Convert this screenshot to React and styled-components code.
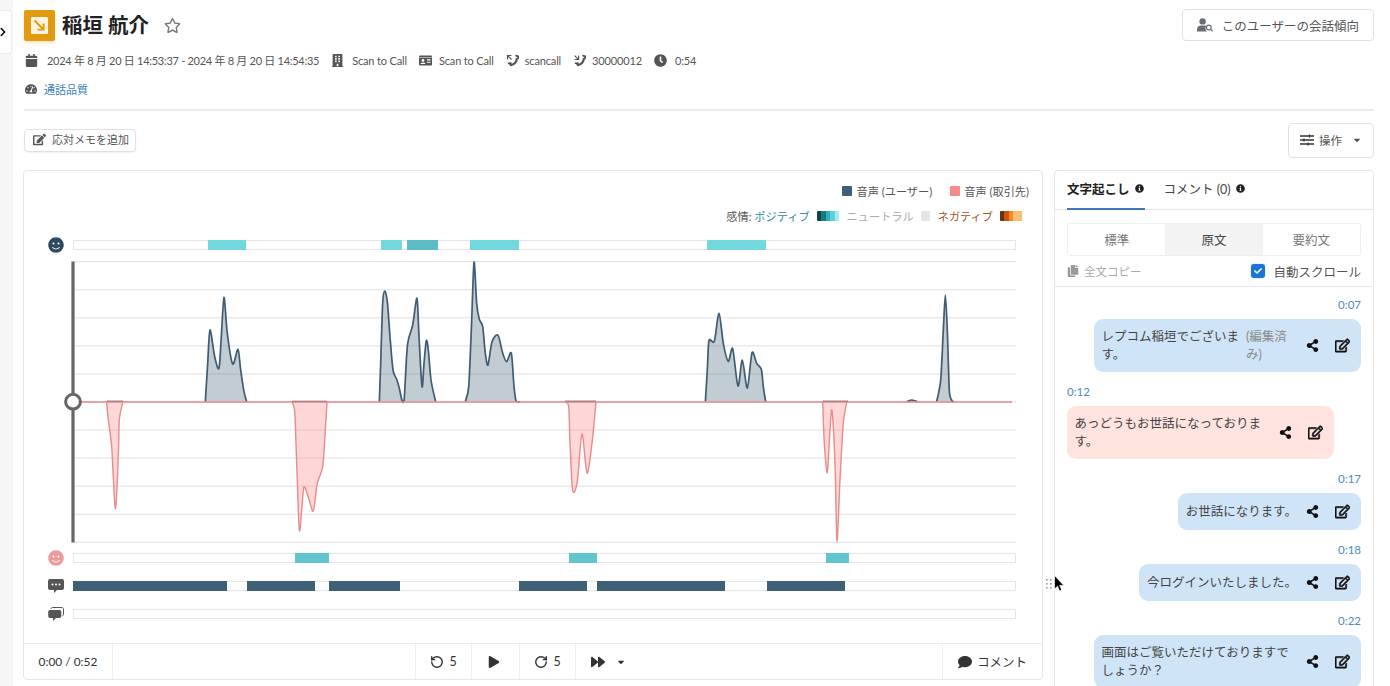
import React from 'react';
import styled, { createGlobalStyle } from 'styled-components';
import {
  FaCalendar, FaBuilding, FaIdCard, FaClock, FaTachometerAlt, FaRegStar, FaEdit, FaRegEdit, FaShareAlt,
  FaCopy, FaCaretDown, FaInfoCircle, FaSmile, FaPlay, FaForward, FaComment, FaCheck, FaChevronRight,
} from 'react-icons/fa';
import { RotateCcw, RotateCw } from 'lucide-react';

const Global = createGlobalStyle`
  html, body { margin: 0; padding: 0; height: 100%; overflow: hidden; background: #fff; }
  body { font-family: Lato, "Noto Sans CJK JP", "Noto Sans", sans-serif; color: #444; }
  * { box-sizing: border-box; }
`;

const Page = styled.div`display: flex; width: 1390px; height: 686px; overflow: hidden; position: relative;`;
const Rail = styled.aside`width: 13px; flex: none; background: #f6f6f6;`;
const RailTab = styled.button`
  display: flex; align-items: center; width: 12px; height: 44px; margin-top: 10px; padding: 0;
  background: #fff; border: 1px solid #ececec; border-left: 0; border-radius: 0 4px 4px 0; overflow: hidden; color: #111;
  svg { margin-left: -2px; flex: none; }
`;
const Main = styled.main`flex: 1; min-width: 0; padding: 0 16px 0 11px;`;
const TitleRow = styled.header`display: flex; align-items: center; justify-content: space-between; height: 32px; margin-top: 9px;`;
const TitleGroup = styled.div`display: flex; align-items: center;`;
const Logo = styled.div`
  width: 31px; height: 31px; background: #e29a10; border-radius: 2px; display: flex; align-items: center; justify-content: center;
  box-shadow: 0 2px 3px rgba(226,154,16,.25);
`;
const Title = styled.h1`margin: 0 0 0 7px; font-size: 20.5px; font-weight: 700; color: #222; line-height: 32px;`;
const StarBtn = styled.span`display: flex; margin-left: 15px; color: #777;`;
const OutlineButton = styled.button`
  display: flex; align-items: center; justify-content: center; gap: ${p => p.$gap ?? 9}px; height: ${p => p.$h}px; width: ${p => p.$w}px;
  padding: 0 0 ${p => p.$pb || 0}px; background: #fff; border: 1px solid #dfe1e4; border-radius: 4px; color: #555;
  font: 400 ${p => p.$fs || 12.5}px Lato, "Noto Sans CJK JP", sans-serif;
`;
const CaretGap = styled.span`display: flex; margin-left: 5px;`;
const MetaRow = styled.div`display: flex; align-items: center; height: 16px; margin-top: 11px; padding-left: 1px; font-size: 11px; color: #555;`;
const MetaItem = styled.span`
  display: flex; align-items: center; gap: ${p => p.$gap ?? 8}px; margin-right: 12px; white-space: nowrap; letter-spacing: ${p => p.$ls ?? -0.15}px;
  svg { flex: none; color: #555; }
`;
const QualityRow = styled.div`display: flex; align-items: center; gap: 7px; height: 16px; margin-top: 13px; padding-left: 1px; font-size: 11px; color: #3d7fb8; svg { color: #555; }`;
const Divider = styled.hr`margin: 12px 0 0; border: 0; height: 2px; background: #ececec;`;
const ActionRow = styled.div`display: flex; align-items: center; justify-content: space-between; height: 35px; margin-top: 12px;`;
const MemoButton = styled.button`
  display: flex; align-items: center; gap: 6px; width: 112px; height: 23px; padding: 0 0 3px 8px; background: #fff;
  border: 1px solid #dfe1e4; border-radius: 4px; box-shadow: 0 1px 2px rgba(0,0,0,.06); color: #555;
  font: 400 11px Lato, "Noto Sans CJK JP", sans-serif; white-space: nowrap;
`;
const Columns = styled.div`display: grid; grid-template-columns: 1020px 320px; gap: 11px; margin: 12px 0 0 -1px; align-items: start;`;
const ChartCard = styled.section`height: 510px; border: 1px solid #e6e6e6; border-radius: 4px; background: #fff; display: flex; flex-direction: column;`;
const Legend = styled.div`display: flex; justify-content: flex-end; align-items: center; gap: ${p => p.$gap}px; height: ${p => p.$h}px; margin-top: ${p => p.$mt}px; padding-right: ${p => p.$pr}px; font-size: 11.2px; color: #555; white-space: nowrap;`;
const LegendItem = styled.span`display: flex; align-items: center; gap: 4px;`;
const LegendSpan = styled.span`color: ${p => p.$c}; margin-left: ${p => p.$ml || 0}px;`;
const Swatch = styled.i`display: block; width: ${p => p.$w || 10}px; height: 10px; background: ${p => p.$c}; border-radius: 1px;`;
const ChartArea = styled.div`padding-left: 24px; margin-top: 16px;`;
const TrackRow = styled.div`display: flex; align-items: center; gap: 9px; height: 10px; margin-top: ${p => p.$mt || 0}px; svg { flex: none; }`;
const Track = styled.div`position: relative; width: 943px; height: 10px; background: #fff; border: 1px solid #e6e6e6;`;
const Segment = styled.i`position: absolute; top: -1px; bottom: -1px; background: ${p => p.$c};`;
const Wave = styled.svg`display: block; margin: 5px 0 4px 12px;`;
const Controls = styled.div`display: flex; height: 36px; margin-top: auto; border-top: 1px solid #ececec; color: #333; font-size: 12.4px;`;
const Cell = styled.div`
  display: flex; align-items: center; justify-content: center; gap: ${p => p.$gap ?? 5}px; flex: ${p => p.$grow ? 1 : 'none'}; width: ${p => p.$w ? p.$w + 'px' : 'auto'};
  padding-right: ${p => p.$pr || 0}px; border-left: ${p => p.$bl ? '1px solid #efefef' : '0'}; color: #333; font-size: ${p => p.$fs ? p.$fs + 'px' : 'inherit'};
`;
const Side = styled.section`height: 600px; border: 1px solid #e6e6e6; border-radius: 4px; background: #fff;`;
const Tabs = styled.div`display: flex; height: 39px; padding-left: 12px; border-bottom: 1px solid #e6e6e6;`;
const Tab = styled.div`
  display: flex; align-items: center; gap: 5px; height: 39px; padding-bottom: 2px; font-size: 12.5px; font-weight: ${p => p.$on ? 700 : 400};
  color: ${p => p.$on ? '#222' : '#444'}; padding-right: ${p => p.$on ? 1 : 0}px; margin-right: 19px;
  border-bottom: 2px solid ${p => p.$on ? '#3d7ab5' : 'transparent'};
  svg { color: #222; }
`;
const Seg = styled.div`display: grid; grid-template-columns: repeat(3, 1fr); height: 33px; margin: 13px 12px 0; border: 1px solid #efefef; border-radius: 3px;`;
const SegItem = styled.div`display: flex; align-items: center; justify-content: center; font-size: 12.5px; color: ${p => p.$on ? '#444' : '#777'}; background: ${p => p.$on ? '#f3f3f3' : '#fff'};`;
const CopyRow = styled.div`display: flex; align-items: center; justify-content: space-between; height: 31px; padding: 0 12px; border-bottom: 1px solid #e9e9e9;`;
const CopyLabel = styled.span`display: flex; align-items: center; gap: 5px; font-size: 11.5px; color: #aaa; svg { color: #999; }`;
const AutoLabel = styled.label`display: flex; align-items: center; gap: 8px; font-size: 12.5px; color: #555;`;
const CheckBox = styled.span`display: flex; align-items: center; justify-content: center; width: 14px; height: 14px; border-radius: 3px; background: #1976d2; color: #fff; box-shadow: 0 0 2px rgba(25,118,210,.4);`;
const Messages = styled.div`display: flex; flex-direction: column; padding: 10px 12px 0;`;
const Message = styled.div`display: flex; flex-direction: column; align-items: ${p => p.$me ? 'flex-end' : 'flex-start'}; margin-bottom: 12px;`;
const Time = styled.div`height: 16px; line-height: 16px; margin-bottom: 6px; font-size: 11.5px; color: #4f8ac0;`;
const Bubble = styled.div`
  display: inline-flex; align-items: center; max-width: 267px; min-height: 37px; padding: 8.5px 4px 8.5px 7.5px; border-radius: 9px;
  background: ${p => p.$me ? '#d0e4f7' : '#ffe3df'}; font-size: 12.5px; line-height: 18px; color: #444;
`;
const BubbleText = styled.div`flex: 1; min-width: 0;`;
const Edited = styled.div`flex: none; width: 51px; color: #8a8a8a;`;
const Actions = styled.div`display: flex; flex: none; color: #111;`;
const ActionIcon = styled.span`display: flex; align-items: center; justify-content: center; width: 30px;`;
const Pointer = styled.div`position: absolute; left: 1046px; top: 575px; display: flex; align-items: flex-start; gap: 2px;`;
const Grip = styled.svg`margin-top: 3px;`;

const GRID = Array.from({ length: 11 }, (_, i) => 261.7 + i * 28.06);
const L = (X, Y) => [20 + X / 3, 230 + Y / 3];
const R = (X, Y) => [520 + X / 3, 230 + Y / 3];
const conv = (f, a) => a.map(([x, y]) => f(x, y));

const USER = [
  conv(L, [[556,515],[563,400],[570,300],[584,380],[597,415],[604,320],[612,202],[622,310],[638,402],[654,358],[662,420],[672,485],[680,515]]),
  conv(L, [[1078,515],[1082,400],[1088,220],[1094,183],[1102,215],[1110,320],[1119,420],[1130,448],[1138,475],[1146,511],[1152,513],[1156,450],[1163,340],[1178,285],[1191,205],[1197,320],[1206,470],[1212,400],[1219,332],[1225,360],[1233,450],[1247,515]]),
  conv(L, [[1336,515],[1346,470],[1354,300],[1362,97],[1370,220],[1378,268],[1388,290],[1396,370],[1404,405],[1416,335],[1434,316],[1448,370],[1460,395],[1474,370],[1482,470],[1488,512],[1500,515]]),
  conv(R, [[556,515],[562,420],[567,332],[583,334],[597,250],[610,340],[625,394],[638,356],[654,468],[667,390],[682,474],[696,368],[710,400],[724,418],[730,470],[737,515]]),
  conv(R, [[1250,515],[1262,450],[1270,300],[1276,195],[1282,300],[1288,480],[1296,512],[1302,515]]),
  conv(R, [[1160,515],[1176,510],[1192,515]]),
];
const PEER = [
  conv(L, [[260,516],[265,570],[275,650],[286,836],[295,680],[298,570],[308,518]]),
  conv(L, [[815,516],[824,545],[830,700],[838,900],[846,830],[852,770],[866,805],[880,843],[892,760],[908,710],[916,600],[921,516]]),
  conv(R, [[135,516],[146,530],[150,640],[158,782],[172,755],[186,612],[201,730],[216,640],[228,516]]),
  conv(R, [[908,516],[913,640],[922,728],[930,600],[936,542],[945,700],[951,933],[960,750],[970,580],[980,516]]),
];
const FLATS = [[107,123],[292,327],[565,596],[823,848]];

function smooth(p, k = 0.14) {
  let d = `M${p[0][0]} ${p[0][1]}`;
  for (let i = 0; i < p.length - 1; i++) {
    const a = p[Math.max(i - 1, 0)], b = p[i], c = p[i + 1], e = p[Math.min(i + 2, p.length - 1)];
    d += ` C${(b[0] + (c[0] - a[0]) * k).toFixed(1)} ${(b[1] + (c[1] - a[1]) * k).toFixed(1)} ${(c[0] - (e[0] - b[0]) * k).toFixed(1)} ${(c[1] - (e[1] - b[1]) * k).toFixed(1)} ${c[0].toFixed(1)} ${c[1].toFixed(1)}`;
  }
  return d;
}

const Shape = ({ pts, fill, stroke, sw }) => (
  <path d={smooth(pts)} fill={fill} stroke={stroke} strokeWidth={sw} strokeLinejoin="round" />
);

const Waveform = () => (
  <Wave width="970" height="294" viewBox="60 255 970 294">
    {GRID.map(y => <line key={y} x1="73" x2="1016" y1={y} y2={y} stroke="#e0e0e0" strokeWidth="1" />)}
    {USER.map((p, i) => <Shape key={i} pts={p} fill="rgba(62,95,118,.32)" stroke="#3f5c72" sw="1.7" />)}
    {FLATS.map(([a, b]) => <line key={a} x1={a} x2={b} y1="401.3" y2="401.3" stroke="#3f5c72" strokeWidth="1.3" />)}
    {PEER.map((p, i) => <Shape key={i} pts={p} fill="rgba(255,130,130,.32)" stroke="#e58c8c" sw="1.4" />)}
    <line x1="80" x2="1012" y1="402" y2="402" stroke="#e58a8a" strokeWidth="1.3" />
    <rect x="71.4" y="261.5" width="3.2" height="281" fill="#666" />
    <circle cx="73" cy="401.7" r="7.4" fill="#fff" stroke="#666" strokeWidth="3" />
  </Wave>
);

const T1 = '#72d8de', T2 = '#5bbcc6', T3 = '#60c5cd', D = '#3e5f76';
const Timeline = ({ segs }) => (
  <Track>
    {segs.map(([a, b, c]) => <Segment key={a} $c={c} style={{ left: a - 74, width: b - a }} />)}
  </Track>
);

const UserSearch = () => (
  <svg width="16" height="14" viewBox="0 0 16 14" fill="#6b6f73">
    <circle cx="5.6" cy="3.4" r="3.2" />
    <path d="M0 13.5v-2.2C0 9 2 7.4 4 7.4h3.4c.8 0 1.4.2 2 .5a4.2 4.2 0 0 0 .6 5.6z" />
    <circle cx="11.8" cy="9.6" r="2.4" fill="none" stroke="#6b6f73" strokeWidth="1.2" />
    <path d="M13.6 11.4l1.9 1.9" stroke="#6b6f73" strokeWidth="1.3" />
  </svg>
);
const Sliders = () => (
  <svg width="14" height="12" viewBox="0 0 14 12" stroke="#333" strokeWidth="1.3">
    <path d="M0 2h14M0 6h14M0 10h14M9.5 .4v3.2M4 4.4v3.2M8 8.4v3.2" />
  </svg>
);
const LogoMark = () => (
  <svg width="17" height="17" viewBox="0 0 17 17">
    <rect width="17" height="17" rx="1" fill="#fdf3df" />
    <path d="M3.5 3.5l8.5 8.5M12.6 6.5v6.1H6.5" fill="none" stroke="#e29a10" strokeWidth="1.9" />
  </svg>
);
const Cursor = () => (
  <svg width="10" height="18" viewBox="0 0 10 18">
    <path d="M.5.5v13.6l3-2.9 2 4.8 2.2-1-2-4.6h4.1z" fill="#000" stroke="#fff" strokeWidth=".7" />
  </svg>
);
const CallIcon = ({ arrow }) => (
  <svg width="13" height="13" viewBox="0 0 13 13" fill="none" stroke="#555">
    <path d="M10.9 4C11 8 8.2 11 4 10.9" strokeWidth="2.2" />
    <path d="M9.3 1.6l2.9.5.5 3M1.8 9.2l3-.1.3 3" strokeWidth="1.5" fill="#555" />
    <path d={arrow} strokeWidth="1.2" />
  </svg>
);
const TalkIcon = () => (
  <svg width="16" height="14" viewBox="0 0 16 14">
    <path d="M2 0h12a2 2 0 0 1 2 2v7a2 2 0 0 1-2 2H9l-3 3v-3H2a2 2 0 0 1-2-2V2a2 2 0 0 1 2-2z" fill="#555" />
    <circle cx="4.5" cy="5.4" r="1" fill="#fff" /><circle cx="8" cy="5.4" r="1" fill="#fff" /><circle cx="11.5" cy="5.4" r="1" fill="#fff" />
  </svg>
);
const ThreadIcon = () => (
  <svg width="16" height="14" viewBox="0 0 16 14">
    <path d="M3 2V1.8C3 1 3.8.5 4.5.5h9.3c.9 0 1.7.7 1.7 1.6v5.3c0 .8-.5 1.3-1.2 1.5" fill="none" stroke="#555" strokeWidth="1" />
    <path d="M2 3h9.5a1.8 1.8 0 0 1 1.8 1.8v4.4A1.8 1.8 0 0 1 11.5 11H8l-3 3v-3H2A1.8 1.8 0 0 1 .2 9.2V4.8A1.8 1.8 0 0 1 2 3z" fill="#555" />
  </svg>
);

const MESSAGES = [
  { t: '0:07', me: true, text: 'レプコム稲垣でございます。', edited: true },
  { t: '0:12', me: false, text: 'あっどうもお世話になっております。' },
  { t: '0:17', me: true, text: 'お世話になります。' },
  { t: '0:18', me: true, text: '今ログインいたしました。' },
  { t: '0:22', me: true, text: '画面はご覧いただけておりますでしょうか？' },
];

export default function App() {
  return (
    <Page>
      <Global />
      <Rail><RailTab aria-label="toggle"><FaChevronRight size={10} /></RailTab></Rail>
      <Main>
        <TitleRow>
          <TitleGroup>
            <Logo><LogoMark /></Logo>
            <Title>稲垣 航介</Title>
            <StarBtn><FaRegStar size={17} /></StarBtn>
          </TitleGroup>
          <OutlineButton $w={192} $h={32}><UserSearch />このユーザーの会話傾向</OutlineButton>
        </TitleRow>
        <MetaRow>
          <MetaItem $gap={9} $ls={-0.28}><FaCalendar size={13} />2024 年 8 月 20 日 14:53:37 - 2024 年 8 月 20 日 14:54:35</MetaItem>
          <MetaItem><FaBuilding size={13} />Scan to Call</MetaItem>
          <MetaItem $gap={7}><FaIdCard size={13} />Scan to Call</MetaItem>
          <MetaItem $gap={6}><CallIcon arrow="M1.5 5.4V1.5h3.9M1.6 1.6l4 4" />scancall</MetaItem>
          <MetaItem $gap={6}><CallIcon arrow="M1.6 1.6l4 4M1.7 5.5h3.9V1.6" />30000012</MetaItem>
          <MetaItem><FaClock size={13} />0:54</MetaItem>
        </MetaRow>
        <QualityRow><FaTachometerAlt size={12} />通話品質</QualityRow>
        <Divider />
        <ActionRow>
          <MemoButton><FaEdit size={13} />応対メモを追加</MemoButton>
          <OutlineButton $w={86} $h={35} $gap={5} $pb={2} $fs={11.5}><Sliders />操作<CaretGap><FaCaretDown size={10} /></CaretGap></OutlineButton>
        </ActionRow>
        <Columns>
          <ChartCard>
            <Legend $h={16} $mt={12} $pr={13} $gap={18}>
              <LegendItem><Swatch $c="#3e5f76" />音声 (ユーザー)</LegendItem>
              <LegendItem><Swatch $c="#f58a8a" />音声 (取引先)</LegendItem>
            </Legend>
            <Legend $h={16} $mt={9} $pr={20} $gap={7}>
              <span>感情: <LegendSpan $c="#2f8aa3">ポジティブ</LegendSpan></span>
              <Swatch $w={22} $c="linear-gradient(90deg,#123f4e 0 20%,#127a85 20% 40%,#2eb0bb 40% 60%,#5cd3dc 60% 80%,#a0eef0 80%)" />
              <LegendSpan $c="#aaa" $ml={1}>ニュートラル</LegendSpan>
              <Swatch $w={9} $c="#e5e5e5" />
              <LegendSpan $c="#a5521f" $ml={1}>ネガティブ</LegendSpan>
              <Swatch $w={22} $c="linear-gradient(90deg,#6b2e0e 0 20%,#c6560f 20% 40%,#f28c28 40% 60%,#fbbf74 60%)" />
            </Legend>
            <ChartArea>
              <TrackRow>
                <FaSmile size={16} color="#2d4a63" />
                <Timeline segs={[[208, 246, T1], [381, 402, T1], [407, 437.5, T2], [470, 518.5, T1], [707, 766, T1]]} />
              </TrackRow>
              <Waveform />
              <TrackRow>
                <FaSmile size={16} color="#ec9a9a" />
                <Timeline segs={[[295, 329, T3], [569, 597, T3], [826, 849, T3]]} />
              </TrackRow>
              <TrackRow $mt={18}>
                <TalkIcon />
                <Timeline segs={[[73, 226.5, D], [246.5, 314.5, D], [328.5, 399.5, D], [519, 587, D], [597, 725, D], [767, 844.5, D]]} />
              </TrackRow>
              <TrackRow $mt={18}>
                <ThreadIcon />
                <Timeline segs={[]} />
              </TrackRow>
            </ChartArea>
            <Controls>
              <Cell $w={88} $fs={11.9}>0:00 / 0:52</Cell>
              <Cell $grow $bl />
              <Cell $w={56} $bl><RotateCcw size={14} strokeWidth={2.4} />5</Cell>
              <Cell $w={48} $bl $pr={3}><FaPlay size={12} /></Cell>
              <Cell $w={56} $bl><RotateCw size={14} strokeWidth={2.4} />5</Cell>
              <Cell $w={65} $bl $gap={11}><FaForward size={14} /><FaCaretDown size={10} /></Cell>
              <Cell $grow />
              <Cell $w={100} $bl><FaComment size={14} />コメント</Cell>
            </Controls>
          </ChartCard>
          <Side>
            <Tabs>
              <Tab $on>文字起こし <FaInfoCircle size={9} /></Tab>
              <Tab>コメント (0) <FaInfoCircle size={9} /></Tab>
            </Tabs>
            <Seg>
              <SegItem>標準</SegItem>
              <SegItem $on>原文</SegItem>
              <SegItem>要約文</SegItem>
            </Seg>
            <CopyRow>
              <CopyLabel><FaCopy size={12} />全文コピー</CopyLabel>
              <AutoLabel><CheckBox><FaCheck size={8} /></CheckBox>自動スクロール</AutoLabel>
            </CopyRow>
            <Messages>
              {MESSAGES.map(m => (
                <Message key={m.t} $me={m.me}>
                  <Time>{m.t}</Time>
                  <Bubble $me={m.me}>
                    <BubbleText>{m.text}</BubbleText>
                    {m.edited && <Edited>(編集済み)</Edited>}
                    <Actions>
                      <ActionIcon><FaShareAlt size={13} /></ActionIcon>
                      <ActionIcon><FaRegEdit size={15} stroke="currentColor" strokeWidth={22} /></ActionIcon>
                    </Actions>
                  </Bubble>
                </Message>
              ))}
            </Messages>
          </Side>
        </Columns>
      </Main>
      <Pointer>
        <Grip width="6" height="12" viewBox="0 0 6 12" fill="#999">
          {[0, 1, 2].map(r => [0, 1].map(c => <rect key={`${r}${c}`} x={c * 4} y={r * 4 + 1} width="1.6" height="1.6" />))}
        </Grip>
        <Cursor />
      </Pointer>
    </Page>
  );
}
